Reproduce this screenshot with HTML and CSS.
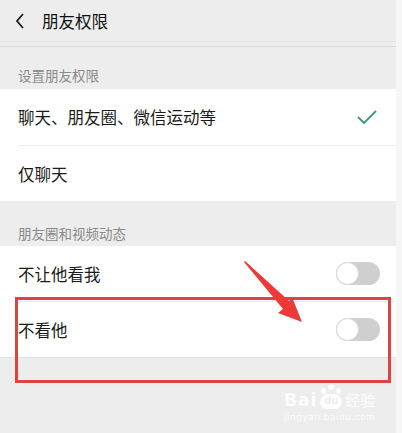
FILE: index.html
```html
<!DOCTYPE html>
<html lang="zh">

<head>
    <meta charset="UTF-8">
    <meta name="viewport" content="width=device-width, initial-scale=1.0">
    <link rel="stylesheet" href="styles.css">
</head>

<body>
    <div class="screen">
        <div class="header">
            <svg class="back" width="12" height="18" viewBox="0 0 12 18">
                <path d="M9 2 L3 9 L9 16" fill="none" stroke="#1a1a1a" stroke-width="1.8" />
            </svg>
            <span class="title">朋友权限</span>
        </div>
        <div class="header-line"></div>

        <div class="section-label">设置朋友权限</div>
        <div class="card">
            <div class="row first">
                <span>聊天、朋友圈、微信运动等</span>
                <svg class="check" width="22" height="16" viewBox="0 0 22 16">
                    <path d="M2 8 L8 14 L20 2" fill="none" stroke="#3a9b6e" stroke-width="1.8" />
                </svg>
            </div>
            <div class="row">
                <span>仅聊天</span>
            </div>
        </div>

        <div class="section-label second">朋友圈和视频动态</div>
        <div class="card bottom-card">
            <div class="row first">
                <span>不让他看我</span>
                <div class="toggle"><div class="knob"></div></div>
            </div>
            <div class="row">
                <span>不看他</span>
                <div class="toggle"><div class="knob"></div></div>
            </div>
        </div>

        <!-- annotation -->
        <div class="mark-box"></div>
        <svg class="arrow" width="80" height="80" viewBox="0 0 80 80">
            <polygon points="0,0 1,-1 45,39 48,35 58,60 34,51 39,47" fill="#ee3a37" />
        </svg>

        <div class="watermark">
            <div class="brand">
                <span class="bai">Bai</span>
                <span class="paw">
                    <i class="t1"></i><i class="t2"></i><i class="t3"></i><i class="pad">du</i>
                </span>
                <span class="jy">经验</span>
            </div>
            <div class="url">jingyan.baidu.com</div>
        </div>
    </div>
</body>

</html>
```

FILE: styles.css
```css
body {
    margin: 0;
    background: #f6f6f6;
    font-family: "Noto Sans CJK SC", "Noto Sans", sans-serif;
}

.screen {
    position: relative;
    width: 396px;
    height: 433px;
    background: #ededed;
    overflow: hidden;
}

.header {
    height: 41px;
    display: flex;
    align-items: center;
    padding-left: 14px;
    border-bottom: 1px solid #e3e3e3;
}

.back {
    margin-right: 16px;
}

.title {
    font-size: 16.5px;
    color: #111;
}

.header-line {
    margin-top: 4px;
    height: 1px;
    background: #d9d9d9;
}

.section-label {
    height: 42px;
    display: flex;
    align-items: flex-end;
    padding: 0 0 5px 18px;
    box-sizing: border-box;
    font-size: 13.5px;
    line-height: 18px;
    color: #8a8a8a;
}

.section-label.second {
    height: 45px;
    padding-bottom: 4px;
}

.card {
    background: #fff;
}

.row {
    height: 55px;
    display: flex;
    align-items: center;
    justify-content: space-between;
    margin-left: 18px;
    padding-right: 16px;
    font-size: 16.5px;
    color: #1a1a1a;
    border-top: 1px solid #ececec;
}

.row.first {
    border-top: 0;
    height: 56px;
}

.bottom-card .row.first {
    height: 55px;
}

.bottom-card {
    border-bottom: 1px solid #e2e2e2;
}

.check {
    margin-right: 2px;
}

.toggle {
    width: 44px;
    height: 23px;
    border-radius: 12px;
    background: #cfcfcf;
    position: relative;
}

.knob {
    position: absolute;
    left: 0;
    top: 0;
    width: 23px;
    height: 23px;
    box-sizing: border-box;
    border-radius: 50%;
    background: #fff;
    border: 1px solid #d6d6d6;
}

.mark-box {
    position: absolute;
    left: 15px;
    top: 297px;
    width: 376px;
    height: 86px;
    box-sizing: border-box;
    border: 3px solid #dc4444;
}

.arrow {
    position: absolute;
    left: 244px;
    top: 262px;
    overflow: visible;
}

.watermark {
    position: absolute;
    left: 284px;
    top: 382px;
    color: rgba(255, 255, 255, 0.85);
}

.brand {
    display: flex;
    align-items: flex-end;
    font-family: "DejaVu Sans", sans-serif;
}

.bai {
    font-size: 17px;
    font-weight: bold;
    letter-spacing: 1px;
    line-height: 20px;
}

.paw {
    position: relative;
    width: 24px;
    height: 28px;
    margin: 0 2px;
}

.paw i {
    position: absolute;
    background: rgba(255, 255, 255, 0.85);
    border-radius: 50%;
}

.paw .t1 { left: 2px; top: 6px; width: 5px; height: 6px; }
.paw .t2 { left: 9px; top: 2px; width: 6px; height: 6px; }
.paw .t3 { left: 17px; top: 6px; width: 5px; height: 6px; }

.paw .pad {
    left: 1px;
    top: 12px;
    width: 22px;
    height: 15px;
    border-radius: 10px 10px 8px 8px;
    font-style: normal;
    font-size: 10px;
    font-weight: bold;
    line-height: 14px;
    text-align: center;
    color: #ededed;
}

.jy {
    font-family: "Noto Sans CJK SC", sans-serif;
    font-size: 15px;
    line-height: 20px;
}

.url {
    font-size: 9px;
    letter-spacing: 0.5px;
    margin-top: 2px;
    color: rgba(255, 255, 255, 0.8);
    font-family: "DejaVu Sans", sans-serif;
}
```
